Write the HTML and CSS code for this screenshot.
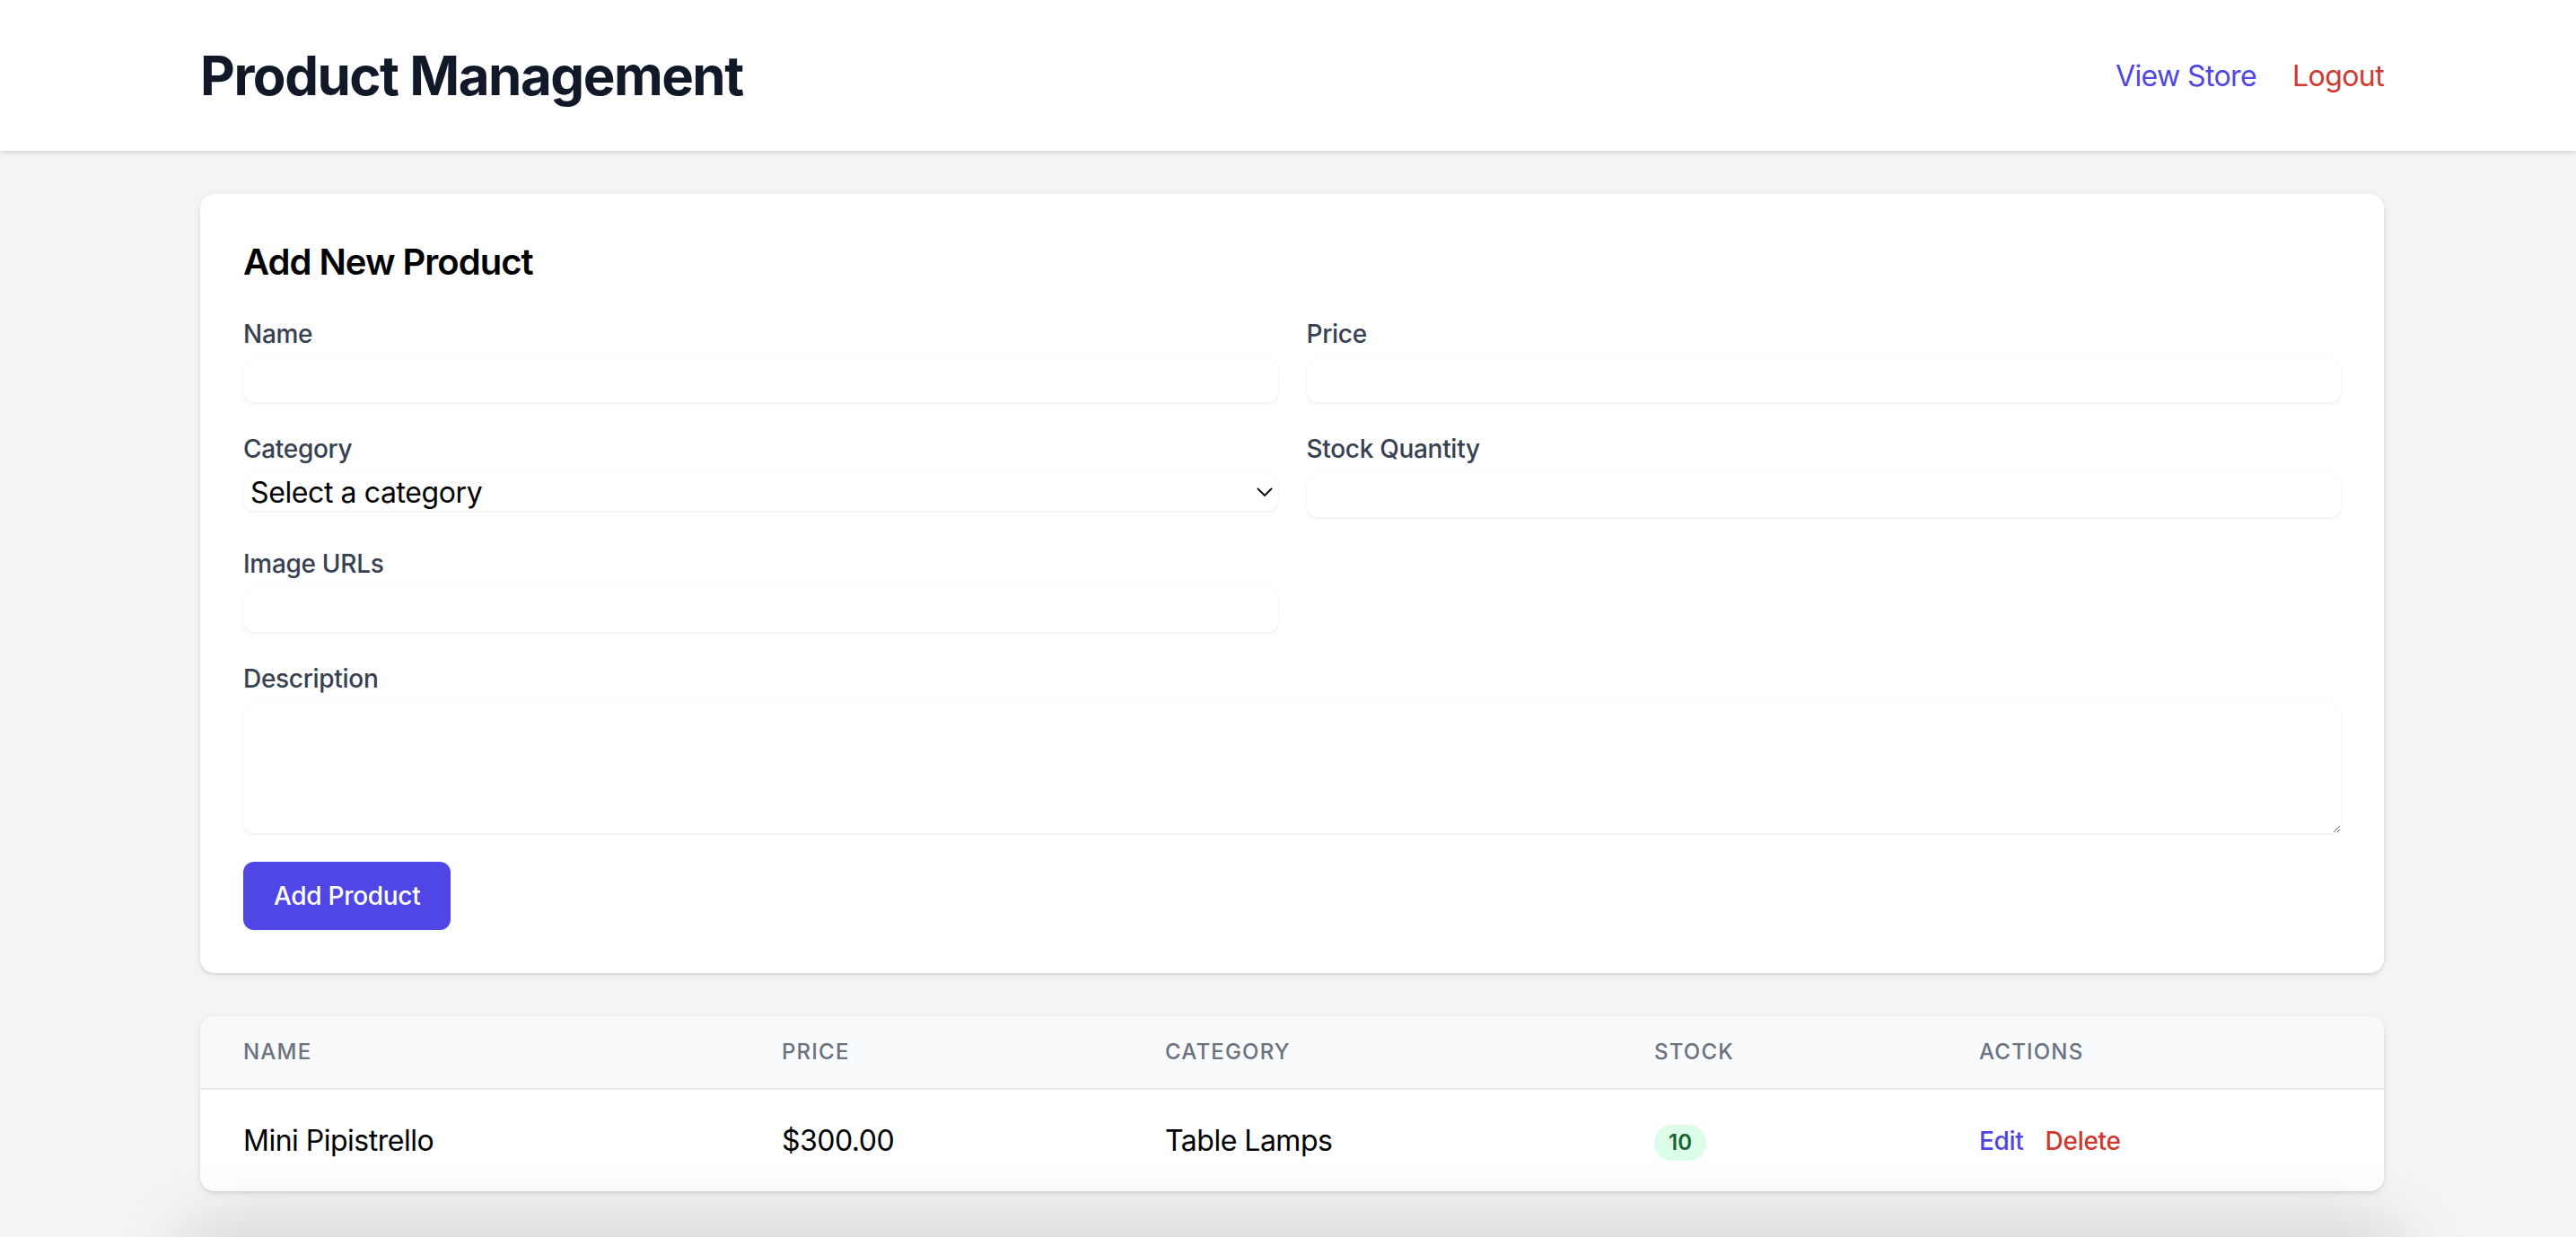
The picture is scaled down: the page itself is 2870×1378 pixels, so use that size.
FILE: index.html
```html
<!DOCTYPE html>
<html lang="en">
<head>
<meta charset="utf-8">
<title>Product Management</title>
<link rel="stylesheet" href="styles.css">
</head>
<body>
<header class="topbar">
  <div class="container topbar-inner">
    <h1 class="page-title">Product Management</h1>
    <nav class="topnav">
      <a class="link link-store" href="#">View Store</a>
      <a class="link link-logout" href="#">Logout</a>
    </nav>
  </div>
</header>

<main class="container main">
  <section class="card form-card">
    <h2 class="card-title">Add New Product</h2>
    <form class="product-form">
      <div class="form-grid">
        <div class="field">
          <label class="field-label">Name</label>
          <input class="field-input" type="text">
        </div>
        <div class="field">
          <label class="field-label">Price</label>
          <input class="field-input" type="text">
        </div>
        <div class="field">
          <label class="field-label">Category</label>
          <div class="select-wrap">
            <select class="field-select">
              <option>Select a category</option>
            </select>
            <svg class="select-chevron" width="18" height="11" viewBox="0 0 18 11"><path d="M1.5 1.5 L9 9 L16.5 1.5" fill="none" stroke="#111" stroke-width="2" stroke-linecap="round" stroke-linejoin="round"/></svg>
          </div>
        </div>
        <div class="field">
          <label class="field-label">Stock Quantity</label>
          <input class="field-input" type="text">
        </div>
        <div class="field">
          <label class="field-label">Image URLs</label>
          <input class="field-input" type="text">
        </div>
        <div class="field"></div>
        <div class="field field-wide">
          <label class="field-label">Description</label>
          <textarea class="field-textarea" rows="3"></textarea>
        </div>
      </div>
      <button class="btn-primary" type="button">Add Product</button>
    </form>
  </section>

  <section class="card table-card">
    <table class="product-table">
      <thead>
        <tr>
          <th class="col-name">Name</th>
          <th class="col-price">Price</th>
          <th class="col-cat">Category</th>
          <th class="col-stock">Stock</th>
          <th class="col-actions">Actions</th>
        </tr>
      </thead>
      <tbody>
        <tr>
          <td>Mini Pipistrello</td>
          <td>$300.00</td>
          <td>Table Lamps</td>
          <td><span class="badge">10</span></td>
          <td class="actions"><a class="act act-edit" href="#">Edit</a><a class="act act-delete" href="#">Delete</a></td>
        </tr>
      </tbody>
    </table>
  </section>

  <div class="below-fold"></div>
</main>
</body>
</html>
```

FILE: styles.css
```css
* { box-sizing: border-box; }

html, body {
  margin: 0;
  padding: 0;
}

body {
  background: #f3f4f6;
  font-family: Inter, "Noto Sans", "Liberation Sans", sans-serif;
  color: #000;
  overflow: hidden;
}

.container {
  margin-left: 223px;
  margin-right: 214px;
}

/* Header */
.topbar {
  background: #ffffff;
  box-shadow: 0 2px 6px 0 rgba(0, 0, 0, 0.1), 0 2px 4px -2px rgba(0, 0, 0, 0.1);
  position: relative;
  z-index: 1;
}

.topbar-inner {
  display: flex;
  align-items: center;
  justify-content: space-between;
  padding: 48px 0;
}

.page-title {
  margin: 0;
  font-size: 60px;
  line-height: 72px;
  font-weight: 700;
  color: #111827;
  letter-spacing: -1.5px;
}

.topnav {
  display: flex;
  gap: 40px;
  padding-top: 2px;
}

.link {
  font-size: 32px;
  line-height: 48px;
  text-decoration: none;
  letter-spacing: -0.6px;
}

.link-store { color: #4f46e5; }
.link-logout { color: #d0392f; }

/* Main */
.main {
  padding-top: 48px;
  padding-bottom: 48px;
}

.card {
  background: #ffffff;
  border-radius: 16px;
  box-shadow: 0 2px 6px 0 rgba(0, 0, 0, 0.1), 0 2px 4px -2px rgba(0, 0, 0, 0.1);
}

.form-card {
  padding: 48px;
}

.card-title {
  margin: 0 0 32px;
  font-size: 40px;
  line-height: 56px;
  font-weight: 600;
  color: #000;
  letter-spacing: -1px;
}

.form-grid {
  display: grid;
  grid-template-columns: 1fr 1fr;
  gap: 32px;
}

.field-wide {
  grid-column: span 2;
}

.field:empty {
  display: none;
}

.field-label {
  display: block;
  font-size: 28px;
  line-height: 40px;
  font-weight: 500;
  color: #374151;
  letter-spacing: -0.3px;
}

.field-input,
.field-select,
.field-textarea {
  display: block;
  width: 100%;
  margin-top: 8px;
  border: 0;
  border-radius: 12px;
  background: #ffffff;
  box-shadow: 0 2px 4px 0 rgba(0, 0, 0, 0.05), 0 0 0 1px rgba(0, 0, 0, 0.015);
  font-family: inherit;
  font-size: 32px;
  color: #000;
  outline: none;
}

.field-input {
  height: 48px;
  padding: 0 8px;
}

.select-wrap {
  position: relative;
}

.field-select {
  height: 41px;
  padding: 0 40px 0 8px;
  -webkit-appearance: none;
  appearance: none;
  line-height: 41px;
  letter-spacing: -0.4px;
}

.select-chevron {
  position: absolute;
  right: 6px;
  top: 15px;
}

.field-textarea {
  height: 144px;
  padding: 8px;
  resize: vertical;
}

.btn-primary {
  margin-top: 32px;
  display: inline-block;
  height: 76px;
  padding: 0 34px;
  border: 0;
  border-radius: 12px;
  background: #4f46e5;
  color: #ffffff;
  font-family: inherit;
  font-size: 28px;
  line-height: 40px;
  font-weight: 500;
  letter-spacing: -0.3px;
  box-shadow: 0 2px 4px 0 rgba(0, 0, 0, 0.05);
  cursor: pointer;
}

/* Table */
.table-card {
  margin-top: 48px;
  overflow: hidden;
}

.product-table {
  width: 100%;
  border-collapse: collapse;
  table-layout: fixed;
}

.product-table thead {
  background: #f9fafb;
}

.product-table th {
  text-align: left;
  padding: 24px 48px;
  font-size: 24px;
  line-height: 32px;
  font-weight: 500;
  color: #6b7280;
  text-transform: uppercase;
  letter-spacing: 1.2px;
  border-bottom: 2px solid #e5e7eb;
}

.col-name { width: 600px; }
.col-price { width: 427px; }
.col-cat { width: 545px; }
.col-stock { width: 362px; }
.col-actions { width: 499px; }

.product-table td {
  padding: 32px 48px;
  font-size: 32px;
  line-height: 48px;
  color: #000;
  white-space: nowrap;
  background: #ffffff;
  letter-spacing: -0.5px;
}

.badge {
  display: inline-block;
  padding: 0 16px;
  border-radius: 9999px;
  background: #dcfce7;
  color: #166534;
  font-size: 24px;
  line-height: 40px;
  font-weight: 600;
  letter-spacing: 0;
  vertical-align: middle;
}

.actions {
  font-size: 28px;
}

.act {
  font-size: 28px;
  font-weight: 500;
  text-decoration: none;
  letter-spacing: -0.3px;
}

.act-edit {
  color: #4f46e5;
  margin-right: 24px;
}

.act-delete {
  color: #d0392f;
}

.below-fold {
  margin-top: 56px;
  height: 300px;
  border-radius: 16px;
  background: #f3f4f6;
  box-shadow: 0 0 80px 20px rgba(0, 0, 0, 0.13);
}
```
